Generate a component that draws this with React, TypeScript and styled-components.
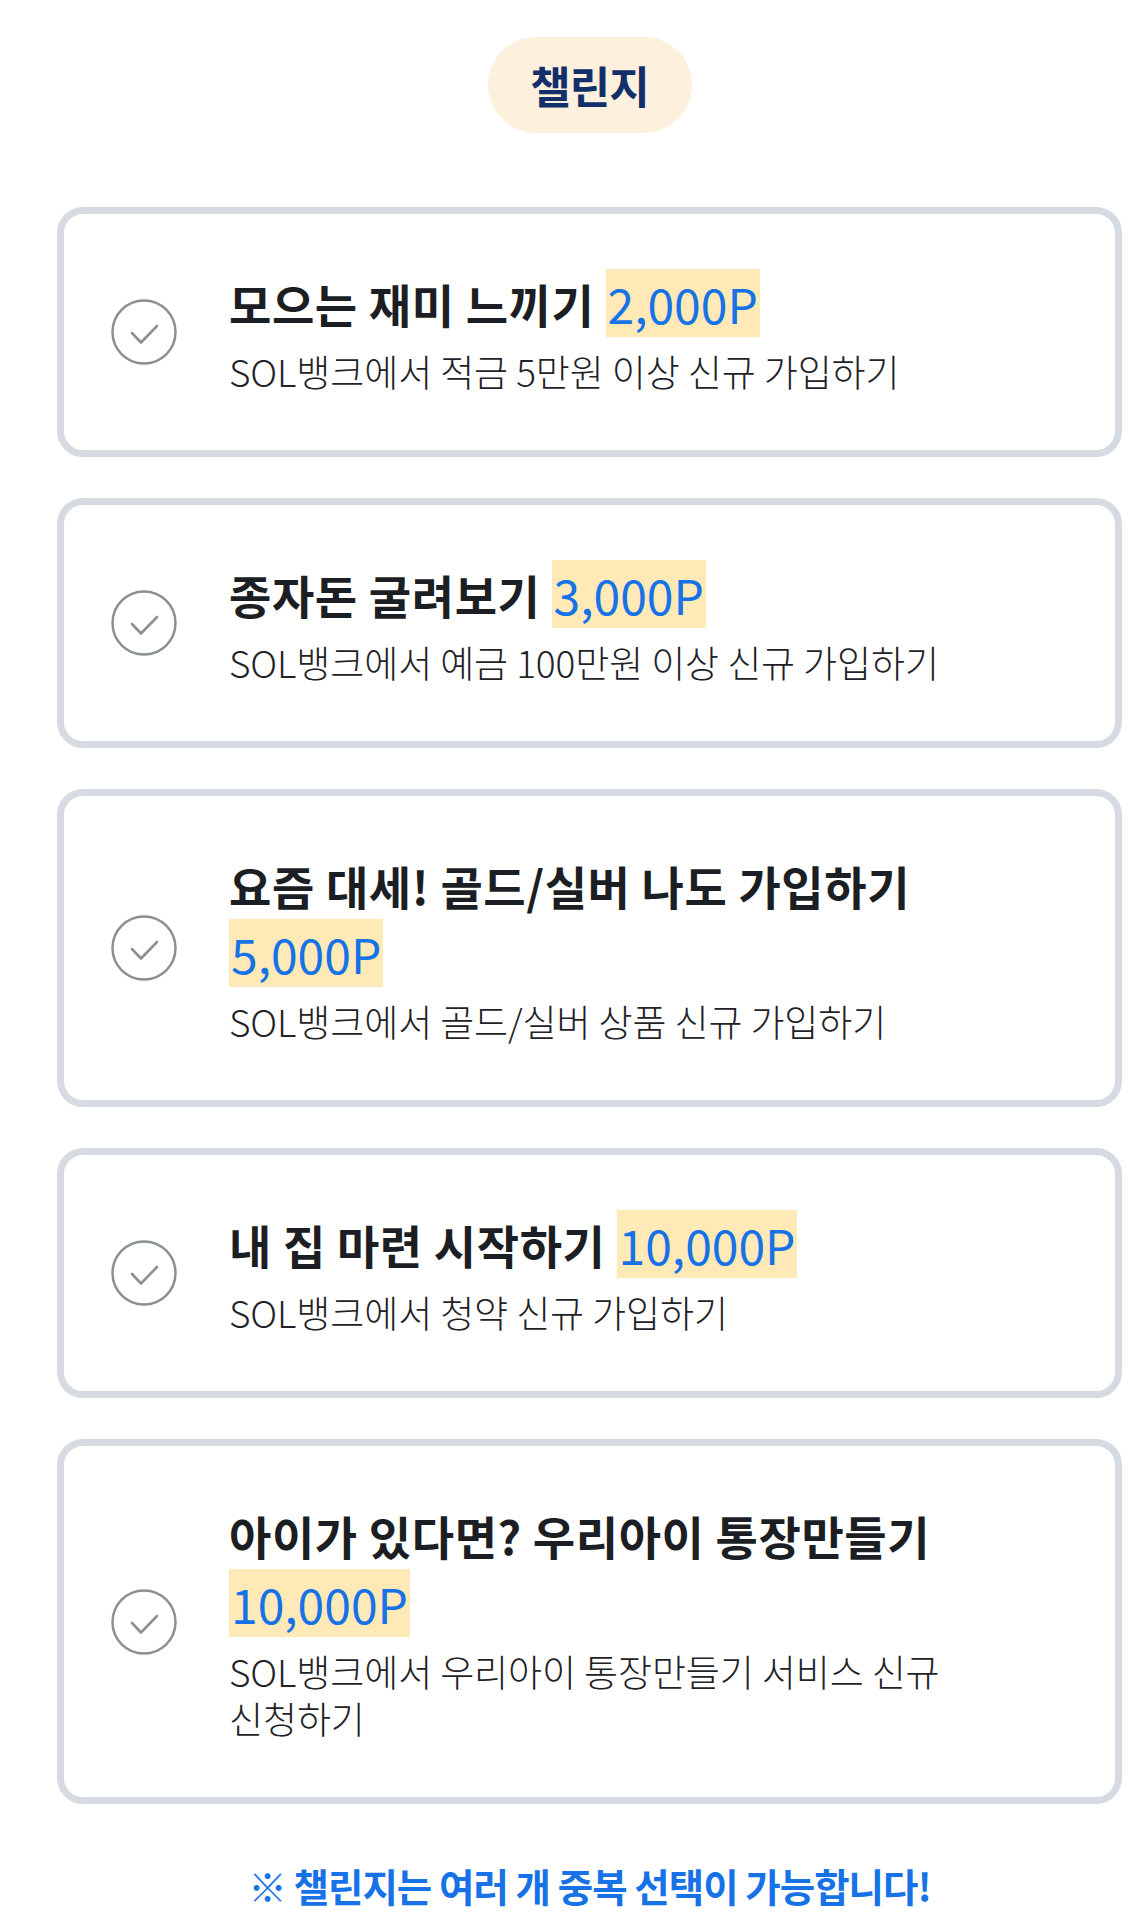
import React from "react";
import styled, { createGlobalStyle } from "styled-components";

const GlobalStyle = createGlobalStyle`
  *, *::before, *::after { box-sizing: border-box; }
  html, body { margin: 0; padding: 0; background: #ffffff; }
  body {
    font-family: "Noto Sans CJK KR", "Noto Sans", sans-serif;
    color: #1b1e22;
    word-break: keep-all;
  }
`;

const Page = styled.main`
  display: flex;
  flex-direction: column;
  padding: 37px 19px 20px 57px;
`;

const BadgeRow = styled.div`
  display: flex;
  justify-content: center;
`;

const Badge = styled.h2`
  margin: 0;
  width: 204px;
  height: 96px;
  border-radius: 48px;
  background: #fdf0dc;
  color: #132f6a;
  font-size: 44px;
  font-weight: 700;
  letter-spacing: -1px;
  display: flex;
  align-items: center;
  justify-content: center;
`;

const CardList = styled.ul`
  list-style: none;
  margin: 74px 0 0;
  padding: 0;
  display: flex;
  flex-direction: column;
  gap: 41px;
`;

const Card = styled.li`
  display: flex;
  align-items: center;
  gap: 52px;
  border: 7px solid #d6dbe1;
  border-radius: 26px;
  padding: 55px 40px 55px 47px;
  background: #ffffff;
`;

const CheckWrap = styled.span`
  flex: 0 0 66px;
  width: 66px;
  height: 66px;
  display: flex;
`;

const Body = styled.div`
  display: flex;
  flex-direction: column;
  min-width: 0;
  max-width: 780px;
`;

const Title = styled.p`
  margin: 0;
  font-size: 46px;
  font-weight: 700;
  letter-spacing: 0.6px;
  line-height: 68px;
  color: #1b1e22;
`;

const Points = styled.span`
  display: inline-block;
  vertical-align: top;
  white-space: nowrap;
  height: 68px;
  line-height: 68px;
  padding: 0 2px;
  background: #fee9b7;
  color: #1672e6;
  font-size: 48px;
  font-weight: 400;
  letter-spacing: 0px;
`;

const Desc = styled.p`
  margin: 11px 0 0;
  font-size: 37px;
  font-weight: 300;
  letter-spacing: -0.1px;
  line-height: 47px;
  color: #1f2226;
`;

const Note = styled.p`
  margin: 57px 0 0;
  text-align: center;
  font-size: 38.5px;
  font-weight: 700;
  letter-spacing: -1px;
  line-height: 48px;
  color: #1672e6;
`;

const CheckIcon = () => (
  <svg width="66" height="66" viewBox="0 0 66 66" fill="none">
    <circle cx="33" cy="33" r="31.5" stroke="#8b9097" strokeWidth="2.5" />
    <path
      d="M21 34 L30 43.5 L46 27"
      stroke="#8b9097"
      strokeWidth="2.6"
      strokeLinecap="round"
      strokeLinejoin="round"
    />
  </svg>
);

type Challenge = { title: string; points: string; desc: string };

const challenges: Challenge[] = [
  { title: "모으는 재미 느끼기", points: "2,000P", desc: "SOL뱅크에서 적금 5만원 이상 신규 가입하기" },
  { title: "종자돈 굴려보기", points: "3,000P", desc: "SOL뱅크에서 예금 100만원 이상 신규 가입하기" },
  { title: "요즘 대세! 골드/실버 나도 가입하기", points: "5,000P", desc: "SOL뱅크에서 골드/실버 상품 신규 가입하기" },
  { title: "내 집 마련 시작하기", points: "10,000P", desc: "SOL뱅크에서 청약 신규 가입하기" },
  { title: "아이가 있다면? 우리아이 통장만들기", points: "10,000P", desc: "SOL뱅크에서 우리아이 통장만들기 서비스 신규 신청하기" },
];

export default function App() {
  return (
    <>
      <GlobalStyle />
      <Page>
        <BadgeRow>
          <Badge>챌린지</Badge>
        </BadgeRow>
        <CardList>
          {challenges.map((c) => (
            <Card key={c.title}>
              <CheckWrap>
                <CheckIcon />
              </CheckWrap>
              <Body>
                <Title>
                  {c.title} <Points>{c.points}</Points>
                </Title>
                <Desc>{c.desc}</Desc>
              </Body>
            </Card>
          ))}
        </CardList>
        <Note>※ 챌린지는 여러 개 중복 선택이 가능합니다!</Note>
      </Page>
    </>
  );
}
